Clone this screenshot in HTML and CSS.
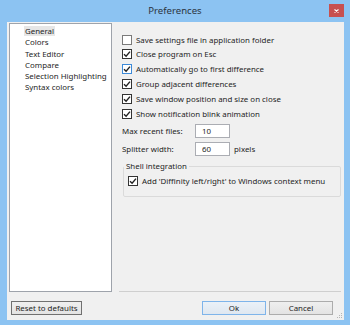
FILE: index.html
```html
<!DOCTYPE html>
<html>
<head>
    <title>Preferences</title>
    <link rel="stylesheet" href="styles.css">
</head>
<body>
    <div class="window">
        <div class="titlebar">
            <span class="title">Preferences</span>
            <button class="close" title="Close">
                <svg width="5" height="4" viewBox="0 0 5 4"><path d="M0.5 0.5 L4.5 3.5 M4.5 0.5 L0.5 3.5" stroke="#fff" stroke-width="1.1"/></svg>
            </button>
        </div>
        <div class="client">
            <div class="main">
                <ul class="pages">
                    <li><span class="selected">General</span></li>
                    <li>Colors</li>
                    <li>Text Editor</li>
                    <li>Compare</li>
                    <li>Selection Highlighting</li>
                    <li>Syntax colors</li>
                </ul>
                <div class="panel">
                    <label class="check"><span class="box"></span>Save settings file in application folder</label>
                    <label class="check"><span class="box on"><svg viewBox="0 0 8 8"><path d="M1 4.2 L3.1 6.3 L7 1.6" fill="none" stroke="#222" stroke-width="1.4"/></svg></span>Close program on Esc</label>
                    <label class="check"><span class="box on hover"><svg viewBox="0 0 8 8"><path d="M1 4.2 L3.1 6.3 L7 1.6" fill="none" stroke="#222" stroke-width="1.4"/></svg></span>Automatically go to first difference</label>
                    <label class="check"><span class="box on"><svg viewBox="0 0 8 8"><path d="M1 4.2 L3.1 6.3 L7 1.6" fill="none" stroke="#222" stroke-width="1.4"/></svg></span>Group adjacent differences</label>
                    <label class="check"><span class="box on"><svg viewBox="0 0 8 8"><path d="M1 4.2 L3.1 6.3 L7 1.6" fill="none" stroke="#222" stroke-width="1.4"/></svg></span>Save window position and size on close</label>
                    <label class="check"><span class="box on"><svg viewBox="0 0 8 8"><path d="M1 4.2 L3.1 6.3 L7 1.6" fill="none" stroke="#222" stroke-width="1.4"/></svg></span>Show notification blink animation</label>

                    <div class="field first">
                        <label for="recent">Max recent files:</label>
                        <input type="text" id="recent" value="10">
                    </div>
                    <div class="field">
                        <label for="splitter">Splitter width:</label>
                        <input type="text" id="splitter" value="60">
                        <span class="unit">pixels</span>
                    </div>

                    <fieldset class="shell">
                        <legend>Shell integration</legend>
                        <label class="check"><span class="box on"><svg viewBox="0 0 8 8"><path d="M1 4.2 L3.1 6.3 L7 1.6" fill="none" stroke="#222" stroke-width="1.4"/></svg></span>Add 'Diffinity left/right' to Windows context menu</label>
                    </fieldset>
                </div>
            </div>
            <div class="footer">
                <button class="btn reset">Reset to defaults</button>
                <div class="spacer"></div>
                <button class="btn ok">Ok</button>
                <button class="btn">Cancel</button>
                <svg class="grip" width="6" height="6" viewBox="0 0 6 6">
                    <rect x="4" y="0" width="1" height="1" fill="#b5b5b5"/>
                    <rect x="2" y="2" width="1" height="1" fill="#b5b5b5"/>
                    <rect x="4" y="2" width="1" height="1" fill="#b5b5b5"/>
                    <rect x="0" y="4" width="1" height="1" fill="#b5b5b5"/>
                    <rect x="2" y="4" width="1" height="1" fill="#b5b5b5"/>
                    <rect x="4" y="4" width="1" height="1" fill="#b5b5b5"/>
                </svg>
            </div>
        </div>
    </div>
</body>
</html>
```

FILE: styles.css
```css
body {
    margin: 0;
    font-family: "Noto Sans", "Open Sans", sans-serif;
    font-size: 7.9px;
    color: #1e1e1e;
}
.window {
    width: 350px;
    height: 325px;
    background-color: #8cc3f2;
    display: flex;
    flex-direction: column;
    box-sizing: border-box;
}
.titlebar {
    height: 22px;
    display: grid;
    grid-template-columns: 1fr auto 1fr;
    align-items: start;
}
.title {
    grid-column: 2;
    font-size: 9.6px;
    color: #2b3440;
    line-height: 22px;
}
.close {
    grid-column: 3;
    justify-self: end;
    margin: 4px 6px 0 0;
    width: 15px;
    height: 13px;
    padding: 0;
    border: none;
    background-color: #c75050;
    display: flex;
    align-items: center;
    justify-content: center;
}
.client {
    flex: 1;
    margin: 0 6px 5px 7px;
    background-color: #f0f0f0;
    display: flex;
    flex-direction: column;
}
.main {
    display: flex;
    padding: 1px 3px 0 2px;
}
.pages {
    list-style: none;
    margin: 0;
    width: 103px;
    height: 269px;
    box-sizing: border-box;
    border: 1px solid #9ea3ab;
    background-color: #ffffff;
    padding: 2px 0 0 15px;
    line-height: 11.3px;
}
.selected {
    background-color: #e6e6e6;
    margin-left: -1px;
    padding: 0 1px;
}
.panel {
    flex: 1;
    margin-left: 7px;
    padding: 9.3px 0 0 0;
    border-bottom: 1px solid #cfcfcf;
}
.check {
    display: flex;
    align-items: center;
    height: 14.8px;
    padding-left: 3px;
}
.box {
    width: 10px;
    height: 10px;
    box-sizing: border-box;
    border: 1px solid #7a7a7a;
    background-color: #ffffff;
    margin-right: 4px;
    display: flex;
}
.box.on {
    border-color: #333333;
}
.box.hover {
    border-color: #3c8ad8;
}
.box svg {
    width: 8px;
    height: 8px;
}
.field {
    display: flex;
    align-items: center;
    height: 14px;
    margin-top: 4px;
    padding-left: 3px;
}
.field.first {
    margin-top: 3px;
}
.field label {
    width: 73px;
}
.field input {
    width: 35px;
    height: 14px;
    box-sizing: border-box;
    border: 1px solid #abadb3;
    padding: 0 0 0 6px;
    font: inherit;
    color: #1e1e1e;
    background-color: #ffffff;
}
.unit {
    margin-left: 4px;
}
.shell {
    margin: 5px 0 0 4px;
    width: 218px;
    box-sizing: border-box;
    border: 1px solid #dadada;
    border-radius: 2px;
    padding: 1px 0 7.5px 0;
}
.shell legend {
    padding: 0 2px;
    margin-left: 0;
    line-height: 11.3px;
}
.shell .check {
    padding-left: 4px;
}
.footer {
    display: flex;
    align-items: flex-start;
    padding: 9px 1px 0 4px;
    flex: 1;
}
.spacer {
    flex: 1;
}
.btn {
    height: 14px;
    box-sizing: border-box;
    padding: 0;
    border: 1px solid #acacac;
    background: linear-gradient(#efefef, #e3e3e3);
    font: inherit;
    line-height: 12px;
    white-space: nowrap;
    color: #1e1e1e;
    width: 64px;
    margin-left: 3px;
}
.btn.reset {
    width: 71px;
    margin-left: 0;
    border-color: #707070;
}
.btn.ok {
    border-color: #7eb4ea;
    background: linear-gradient(#eaf1f8, #dfe7f0);
}
.grip {
    align-self: flex-end;
    margin: 0 0 1px 4px;
}
```
